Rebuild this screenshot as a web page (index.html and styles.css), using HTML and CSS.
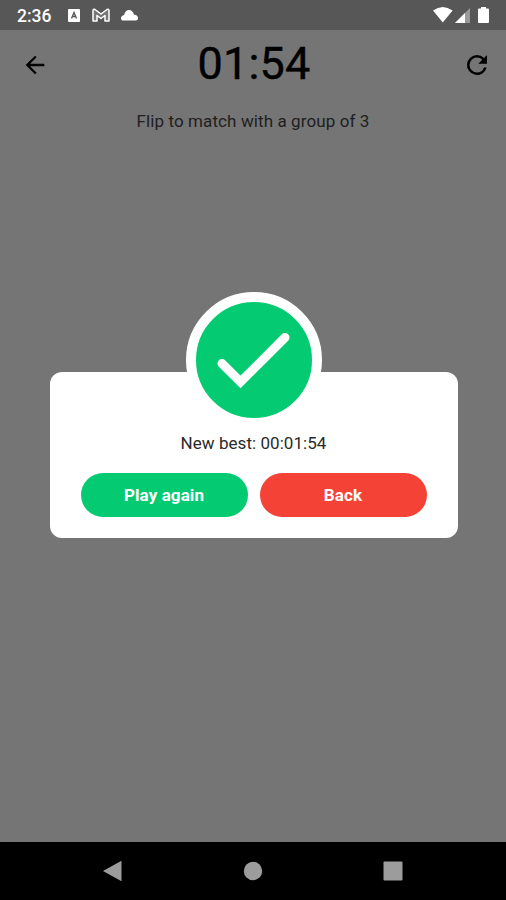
FILE: index.html
```html
<!DOCTYPE html>
<html lang="en">
<head>
    <meta charset="UTF-8">
    <meta name="viewport" content="width=device-width, initial-scale=1.0">
    <title>Flip cards</title>
    <link rel="stylesheet" href="styles.css">
</head>
<body>
    <div class="status-bar">
        <span class="clock">2:36</span>
        <svg class="notifications" width="72" height="14" viewBox="0 0 72 14">
            <rect x="0" y="1" width="12" height="13" rx="1" fill="#fff"/>
            <path d="M3.500 10.500L6 4.500l2.500 6M4.500 8.500h3" fill="none" stroke="#555" stroke-width="1.300"/>
            <path d="M25 13V2.500Q25 .7 27 1.500L33 6l6-4.500q2-.8 2 1V13h-4V7.500L33 10.500l-4-3V13z" fill="#777" stroke="#fff" stroke-width="1.500" stroke-linejoin="round"/>
            <path d="M55 12.500Q52.500 12 53 9.500q.5-2 3-2.500 1.500-5 5-5 3.500 0 5 4.500 4 .5 4 3.500 0 2.500-2.500 2.500z" fill="#fff"/>
        </svg>
        <svg class="system" width="57" height="18" viewBox="0 0 57 18">
            <path d="M0 4.500Q9.800-2.500 19.600 4.500L9.800 16.500z" fill="#fff"/>
            <path d="M37 2v15H22z" fill="#999"/>
            <path d="M32 7v10H22z" fill="#fff"/>
            <path d="M48 1h5v1.500h2a1 1 0 0 1 1 1V16a1 1 0 0 1-1 1h-9a1 1 0 0 1-1-1V3.500a1 1 0 0 1 1-1h2z" fill="#fff"/>
        </svg>
    </div>

    <div class="app-bar">
        <svg width="30" height="28" viewBox="0 0 24 24">
            <path d="M20 11H7.830l5.590-5.590L12 4l-8 8 8 8 1.410-1.410L7.830 13H20z"/>
        </svg>
        <div class="timer">01:54</div>
        <svg width="30" height="30" viewBox="0 0 24 24">
            <path d="M17.650 6.350A7.958 7.958 0 0 0 12 4a8 8 0 1 0 7.730 10h-2.080A5.990 5.990 0 0 1 12 18a6 6 0 1 1 0-12c1.660 0 3.140.690 4.220 1.780L13 11h7V4z"/>
        </svg>
    </div>

    <div class="board">
        <p class="hint">Flip to match with a group of 3</p>
    </div>

    <div class="nav-bar">
        <svg width="20" height="22" viewBox="0 0 20 22"><path d="M0 11L18.500 .700v20.600z"/></svg>
        <svg width="20" height="22" viewBox="0 0 20 22"><circle cx="10" cy="11" r="9.200"/></svg>
        <svg width="20" height="22" viewBox="0 0 20 22"><rect x=".5" y="1.500" width="19" height="19" rx="1"/></svg>
    </div>

    <div class="dialog">
        <div class="badge">
            <svg width="116" height="116" viewBox="0 0 116 116">
                <path d="M26 61.500L44.500 80 89 35.500"/>
            </svg>
        </div>
        <p class="result">New best: 00:01:54</p>
        <div class="actions">
            <button class="again">Play again</button>
            <button class="back">Back</button>
        </div>
    </div>
</body>
</html>
```

FILE: styles.css
```css
* {
    box-sizing: border-box;
}

body {
    margin: 0;
    height: 900px;
    display: flex;
    flex-direction: column;
    position: relative;
    overflow: hidden;
    background-color: #757575;
    font-family: Roboto, "Liberation Sans", sans-serif;
}

.status-bar {
    height: 30px;
    padding: 0 16px 0 17px;
    display: flex;
    align-items: center;
    background-color: #575757;
    color: white;
}

.clock {
    width: 51px;
    padding-top: 1px;
    font-size: 17.5px;
    font-weight: 500;
}

.system {
    margin-left: auto;
}

.app-bar {
    height: 69px;
    padding: 0 14px 0 20px;
    display: flex;
    align-items: center;
    justify-content: space-between;
}

.timer {
    padding: 0 4px 2px 0;
    font-size: 45px;
    font-weight: 400;
    letter-spacing: 0.2px;
    color: black;
    -webkit-text-stroke: 0.4px black;
}

.board {
    flex: 1;
}

.hint {
    margin: 12px 0 0;
    text-align: center;
    font-size: 17px;
    line-height: 20px;
    letter-spacing: 0.1px;
    color: #202020;
}

.nav-bar {
    height: 58px;
    padding: 0 103px;
    display: flex;
    align-items: center;
    justify-content: space-between;
    background-color: black;
    fill: #9c9c9c;
}

/* dialog lies over the board */
.dialog {
    position: absolute;
    top: 372px;
    left: 49.5px;
    width: 408px;
    height: 165.5px;
    padding: 0 31px;
    border-radius: 12px;
    background-color: white;
}

.badge {
    width: 136px;
    height: 136px;
    margin: -80px auto 0;
    border: 10px solid white;
    border-radius: 50%;
    background-color: #04cb72;
}

.badge svg {
    display: block;
    fill: none;
    stroke: white;
    stroke-width: 9;
    stroke-linecap: round;
}

.result {
    margin: 5px 0 20px;
    text-align: center;
    font-size: 17px;
    line-height: 20px;
    letter-spacing: 0.05px;
    color: #2a2a2a;
}

.actions {
    display: flex;
    gap: 12px;
}

button {
    flex: 1;
    height: 44px;
    padding: 0;
    border: none;
    border-radius: 22px;
    color: white;
    font-family: inherit;
    font-size: 17px;
    font-weight: bold;
    letter-spacing: 0.1px;
}

.again {
    background-color: #04cb72;
}

.back {
    background-color: #f44336;
}
```
